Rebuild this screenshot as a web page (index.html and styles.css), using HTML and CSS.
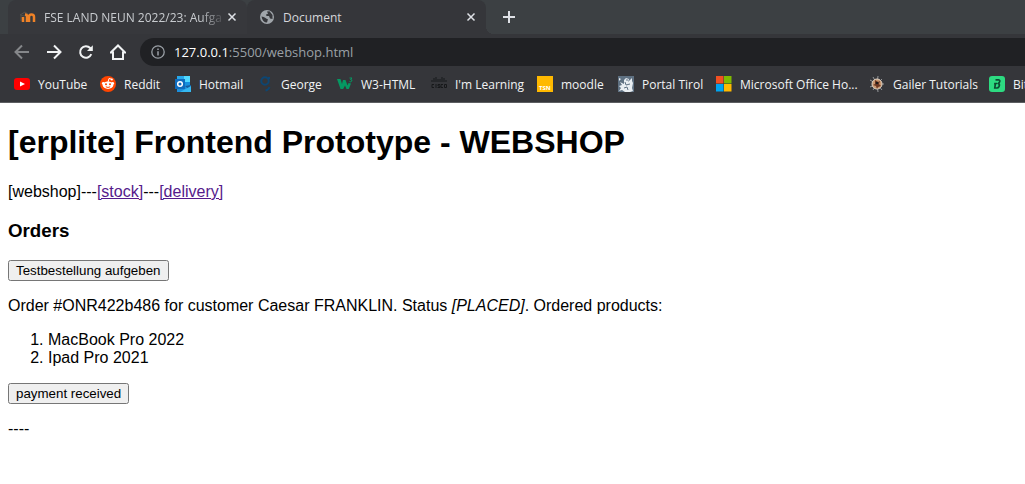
FILE: index.html
```html
<!DOCTYPE html>
<html lang="de">
<head>
<meta charset="utf-8">
<title>Document</title>
<link rel="stylesheet" href="styles.css">
</head>
<body>
<header class="browser">
  <div class="tabs">
    <div class="tab">
      <svg class="icon" viewBox="0 0 16 16" fill="none"><path d="M0 6 5 3l3 2-4 2zM1 7v5" stroke="#55504b" stroke-width="1"/><path d="M3 13V8M7 13V7.500q0-2-2-2M9 13V8q0-2.500 2.500-2.500T14 8v5" stroke="#f08227" stroke-width="2.500"/></svg>
      <span class="tab-title fade">FSE LAND NEUN 2022/23: Aufga</span>
      <button class="close" aria-label="Tab schließen"><svg viewBox="0 0 10 10"><path d="m1.500 1.500 7 7m0-7-7 7"/></svg></button>
    </div>
    <div class="tab active">
      <svg class="icon" viewBox="0 0 16 16"><circle cx="8" cy="8" r="7" fill="#a0a5aa"/><path d="M2.500 7.500q2.500 0 4 1.500t2.500 1l-1 3.500Q3.500 13.500 2.500 7.500zM8 2.500l2.500-.2 3 3.700v4l-2.500-.5-1-2.500H7.500L7 5.500l2-.8z" fill="#35363a"/></svg>
      <span class="tab-title">Document</span>
      <button class="close" aria-label="Tab schließen"><svg viewBox="0 0 10 10"><path d="m1.500 1.500 7 7m0-7-7 7"/></svg></button>
    </div>
    <button class="new-tab" aria-label="Neuer Tab"><svg viewBox="0 0 12 12"><path d="M6 0v12M0 6h12"/></svg></button>
  </div>
  <div class="toolbar">
    <button class="nav dim" aria-label="Zurück"><svg viewBox="0 0 16 16"><path d="M15 8H2M8 1.500 1.500 8 8 14.500"/></svg></button>
    <button class="nav" aria-label="Vor"><svg viewBox="0 0 16 16"><path d="M1 8h13M8 1.500 14.500 8 8 14.500"/></svg></button>
    <button class="nav" aria-label="Neu laden"><svg viewBox="0 0 16 16"><path d="M13.300 10.200A5.800 5.800 0 1 1 12.200 4l1 1"/><path d="M14.800 1.200V7H9z" fill="#f1f3f4" stroke="none"/></svg></button>
    <button class="nav" aria-label="Startseite"><svg viewBox="0 0 16 16"><path d="M.8 8.500 8 1.500l7.200 7H13V15H3V8.500z"/></svg></button>
    <div class="address">
      <svg class="info" viewBox="0 0 14 14"><circle cx="7" cy="7" r="6.200" fill="none" stroke="#9aa0a6" stroke-width="1.300"/><path d="M7 6.200v4.300M7 3.500V5" stroke="#9aa0a6" stroke-width="1.500"/></svg>
      <span><b>127.0.0.1</b>:5500/webshop.html</span>
    </div>
  </div>
  <nav class="bookmarks">
    <a href="#"><svg viewBox="0 0 16 16"><rect y="2" width="16" height="12" rx="3" fill="#f00"/><path d="m6 5.500 5 2.500-5 2.500z" fill="#fff"/></svg>YouTube</a>
    <a href="#"><svg viewBox="0 0 16 16"><circle cx="8" cy="8" r="8" fill="#ff4500"/><path d="m8 6 1-3.500 2.500.7" stroke="#fff" fill="none"/><circle cx="11.800" cy="3.500" r="1.100" fill="#fff"/><circle cx="3.300" cy="7.500" r="1.400" fill="#fff"/><circle cx="12.700" cy="7.500" r="1.400" fill="#fff"/><ellipse cx="8" cy="9.200" rx="5.200" ry="3.700" fill="#fff"/><circle cx="6" cy="8.300" r="1" fill="#ff4500"/><circle cx="10" cy="8.300" r="1" fill="#ff4500"/><path d="M5.800 10.800q2.200 1.300 4.400 0" stroke="#ff4500" fill="none"/></svg>Reddit</a>
    <a href="#"><svg viewBox="0 0 16 16"><path d="M2 0h13v10H2z" fill="#1490df"/><path d="M9 0h6v6H9z" fill="#50d9ff"/><path d="M2 0h7v4H2z" fill="#28a8ea"/><path d="M2 9h14v7H2z" fill="#1b8fdc"/><path d="m10 10 6 5V9z" fill="#155a9c"/><path d="M5 16 16 10v6z" fill="#35b8f1"/><path d="M0 3h10v10H0z" fill="#0f6cbd"/><circle cx="5" cy="8" r="2.300" fill="none" stroke="#fff" stroke-width="1.500"/></svg>Hotmail</a>
    <a href="#"><svg viewBox="0 0 16 16" fill="none" stroke="#0d4672" stroke-width="2"><circle cx="8" cy="5" r="3.700"/><path d="M12 1v2M12.500 11q-1 3-4 3.500"/></svg>George</a>
    <a href="#"><svg viewBox="0 0 16 16"><path d="m0 3 3.500 10h2.700L8 9.500 9.500 13h2.300L14 7.500 11.500 7l-1 2.500L8.500 4H6L5 8 3.500 3z" fill="#059862"/><path d="M12.500 2H15l-1.500 1.500q2 0 1.300 1.500t-2.300.5" fill="none" stroke="#059862"/></svg>W3-HTML</a>
    <a href="#"><svg viewBox="0 0 16 16" fill="none" stroke="#17181a"><path d="M1 4v2M3 2v4M5 1v5M7 3v3M9 3v3M11 1v5M13 2v4M15 4v2M3 8.500H1v3h2M5 8v4M9 8.500H7V10h2v1.500H6.500M12 8.500h-2v3h2M13.500 8.500h2v3h-2z"/></svg>I'm Learning</a>
    <a href="#"><svg viewBox="0 0 16 16"><path d="M0 0h16v16H0z" fill="#ffb900"/><text class="tsn" x="2" y="14">TSN</text></svg>moodle</a>
    <a href="#"><svg viewBox="0 0 16 16"><path d="M0 0h16v16H0z" fill="#5f7182"/><path d="m7 16-3-2-3 1 2-3-2-2 3-1-2-3 4 2V4l2-2 3 1-1 3 2-2 2-2v3l1 2-1 5 1 3-3 1zM1 2l2 1-2 2z" fill="#e8edf1"/><path d="m7 6 1 3 4-1M6 12l3-1 1 3M9 3v2" stroke="#5f7182" fill="none"/></svg>Portal Tirol</a>
    <a href="#"><svg viewBox="0 0 16 16"><path d="M0 0h7.500v7.500H0z" fill="#f25022"/><path d="M8 0h7.500v7.500H8z" fill="#7fba00"/><path d="M0 8h7.500v7.500H0z" fill="#00a4ef"/><path d="M8 8h7.500v7.500H8z" fill="#ffb900"/></svg>Microsoft Office Ho...</a>
    <a href="#"><svg viewBox="0 0 16 16"><path d="M8 8 4 1m4 7 1-8M8 8l5-5M8 8h7M8 8l5 6M8 8l1 8M8 8l-4 6M8 8l-7 3M8 8 1 4" stroke="#96989b"/><circle cx="8" cy="8" r="5" fill="#c9966e" stroke="#dfd1c1"/><path d="m6 4 3 2 2-1-1 3 2 2-3 1-1 2-1-3-3-1 2-1z" fill="#6e3823"/><circle cx="8" cy="7" r="1.300" fill="#201b19"/></svg>Gailer Tutorials</a>
    <a href="#"><svg viewBox="0 0 16 16"><rect width="16" height="16" rx="3" fill="#2ddb81"/><path d="M6.500 3.800h3q2 .5 1 2.200L9.500 7.500q1.500 1 .5 3-.8 1.500-2 1.500H5.800L6.300 8l-1-.5h3" fill="none" stroke="#0d4b32" stroke-width="1.700"/></svg>Bit</a>
  </nav>
</header>
<main class="page">
  <h1>[erplite] Frontend Prototype - WEBSHOP</h1>
  <p>[webshop]---<a href="#stock">[stock]</a>---<a href="#delivery">[delivery]</a></p>
  <h3>Orders</h3>
  <button>Testbestellung aufgeben</button>
  <p>Order #ONR422b486 for customer Caesar FRANKLIN. Status <i>[PLACED]</i>. Ordered products:</p>
  <ol>
    <li>MacBook Pro 2022</li>
    <li>Ipad Pro 2021</li>
  </ol>
  <button>payment received</button>
  <p>----</p>
</main>
</body>
</html>
```
FILE: styles.css
```css
body {
  margin: 0;
  background: #fff;
  font-family: "Liberation Sans", Arial, sans-serif;
}

.browser {
  background: #35363a;
  border-bottom: 1px solid #5c5e61;
  color: #f1f3f4;
  font: 12px "Open Sans", "Noto Sans", sans-serif;
  overflow: hidden;
}

.browser button {
  display: flex;
  align-items: center;
  justify-content: center;
  flex: none;
  padding: 0;
  border: 0;
  background: none;
}

.browser svg {
  display: block;
  flex: none;
}

.tabs {
  display: flex;
  height: 34px;
  padding-left: 8px;
  background: #3c4043;
}

.tab {
  position: relative;
  display: flex;
  align-items: center;
  box-sizing: border-box;
  width: 239px;
  padding: 0 10px 0 12px;
  border-radius: 8px 8px 0 0;
  background: #37383c;
  color: #c8cbcf;
}

.tab.active {
  background: #35363a;
  color: #d5d7da;
}

.tab.active::after {
  content: "";
  position: absolute;
  left: 100%;
  bottom: 0;
  width: 8px;
  height: 8px;
  background: radial-gradient(circle at 100% 0, transparent 8px, #35363a 8px);
}

.icon {
  width: 16px;
  height: 16px;
  margin-right: 8px;
}

.tab-title {
  flex: 1;
  min-width: 0;
  overflow: hidden;
  white-space: nowrap;
}

.fade {
  mask-image: linear-gradient(to right, #000 88%, rgba(0, 0, 0, 0.2));
}

.browser .close {
  width: 10px;
  height: 10px;
  margin-left: 6px;
}

.close svg {
  width: 10px;
  height: 10px;
}

.close path,
.new-tab path {
  stroke: #dee1e6;
  stroke-width: 1.5;
}

.browser .new-tab {
  width: 46px;
}

.new-tab svg {
  width: 12px;
  height: 12px;
}

.new-tab path {
  stroke-width: 2;
}

.toolbar {
  display: flex;
  align-items: center;
  gap: 16px;
  padding: 4px 0 0 14px;
}

.nav svg {
  width: 16px;
  height: 16px;
}

.nav path {
  fill: none;
  stroke: #f1f3f4;
  stroke-width: 2;
}

.nav path[fill] {
  fill: #f1f3f4;
  stroke: none;
}

.dim path {
  stroke: #85878a;
}

.address {
  display: flex;
  align-items: center;
  flex: 1;
  gap: 9px;
  height: 28px;
  margin: 0 -20px 0 -2px;
  padding-left: 11px;
  border-radius: 14px;
  background: #202124;
  color: #9aa0a6;
  font-size: 13px;
}

.address b {
  color: #fff;
  font-weight: 400;
}

.info {
  width: 14px;
  height: 14px;
}

.bookmarks {
  display: grid;
  grid-template-columns: 86px 75px 82px 80px 94px 106px 81px 98px 153px 120px 60px;
  height: 36px;
  padding-left: 14px;
}

.bookmarks a {
  display: flex;
  align-items: center;
  gap: 8px;
  color: #f1f3f4;
  text-decoration: none;
  white-space: nowrap;
}

.bookmarks svg {
  width: 16px;
  height: 16px;
}

.tsn {
  fill: #fff;
  font: bold 6px "Open Sans", sans-serif;
}

.page {
  display: flow-root;
  padding: 0 8px;
}

.page a {
  color: #551a8b;
}

.page button {
  font-family: "Liberation Sans", Arial, sans-serif;
}
```
